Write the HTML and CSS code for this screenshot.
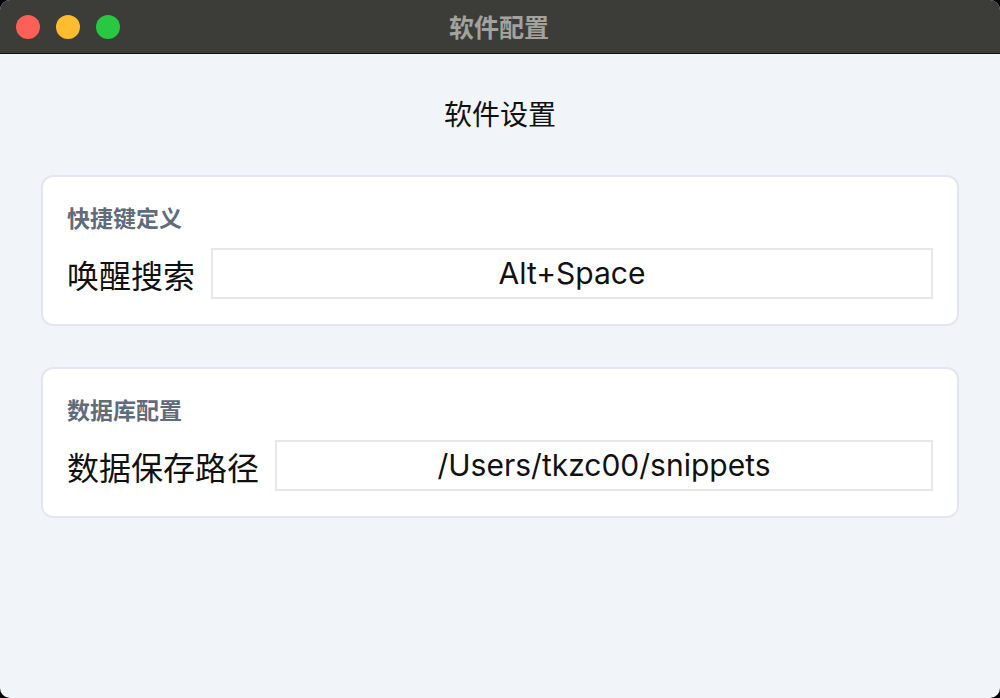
FILE: index.html
```html
<!DOCTYPE html>
<html lang="zh-CN">
<head>
<meta charset="utf-8">
<title>软件配置</title>
<link rel="stylesheet" href="styles.css">
</head>
<body>
<div class="window">
  <header class="titlebar">
    <div class="lights">
      <span class="light red"></span>
      <span class="light yellow"></span>
      <span class="light green"></span>
    </div>
    <div class="title">软件配置</div>
    <div></div>
  </header>
  <main class="content">
    <h1 class="heading">软件设置</h1>
    <section class="card">
      <h2 class="card-title">快捷键定义</h2>
      <div class="row">
        <label class="label">唤醒搜索</label>
        <div class="field">Alt+Space</div>
      </div>
    </section>
    <section class="card card-second">
      <h2 class="card-title">数据库配置</h2>
      <div class="row">
        <label class="label">数据保存路径</label>
        <div class="field">/Users/tkzc00/snippets</div>
      </div>
    </section>
  </main>
</div>
</body>
</html>
```

FILE: styles.css
```css
html, body {
  margin: 0;
  padding: 0;
  background: #000;
}
body {
  font-family: "Inter", "Noto Sans CJK SC", sans-serif;
}
.window {
  width: 1000px;
  height: 698px;
  border-radius: 10px;
  overflow: hidden;
  background: #f1f5f9;
}
.titlebar {
  height: 53px;
  background: #3c3d38;
  border-bottom: 1px solid #111;
  display: grid;
  grid-template-columns: 1fr auto 1fr;
  align-items: center;
}
.lights {
  display: flex;
  gap: 16px;
  padding-left: 16px;
  padding-top: 1px;
}
.light {
  width: 24px;
  height: 24px;
  border-radius: 50%;
  display: block;
}
.red { background: #fe5f57; }
.yellow { background: #febc2e; }
.green { background: #28c840; }
.title {
  font-family: "Noto Sans CJK SC", sans-serif;
  font-weight: 700;
  font-size: 25px;
  color: #a2a29e;
  line-height: 1;
  margin-left: -2px;
}
.content {
  padding: 39px 41px 0;
}
.heading {
  margin: 0 0 42px;
  text-align: center;
  font-family: "Noto Sans CJK SC", sans-serif;
  font-weight: 400;
  font-size: 28px;
  line-height: 40px;
  color: #111;
}
.card {
  background: #fff;
  border: 2px solid #e3e7ed;
  border-radius: 12px;
  padding: 24px 24px 25px;
}
.card-second {
  margin-top: 41px;
}
.card-title {
  margin: 0 0 15px;
  font-family: "Noto Sans CJK SC", sans-serif;
  font-weight: 700;
  font-size: 23px;
  line-height: 32px;
  color: #606b7b;
}
.row {
  display: flex;
  align-items: center;
  gap: 16px;
}
.label {
  font-family: "Noto Sans CJK SC", sans-serif;
  font-size: 32px;
  line-height: 40px;
  color: #111;
  white-space: nowrap;
}
.field {
  flex: 1;
  height: 47px;
  border: 2px solid #e5e7eb;
  background: #fff;
  text-align: center;
  font-family: "Inter", "Noto Sans CJK SC", sans-serif;
  font-size: 30px;
  line-height: 47px;
  color: #111;
}
```
